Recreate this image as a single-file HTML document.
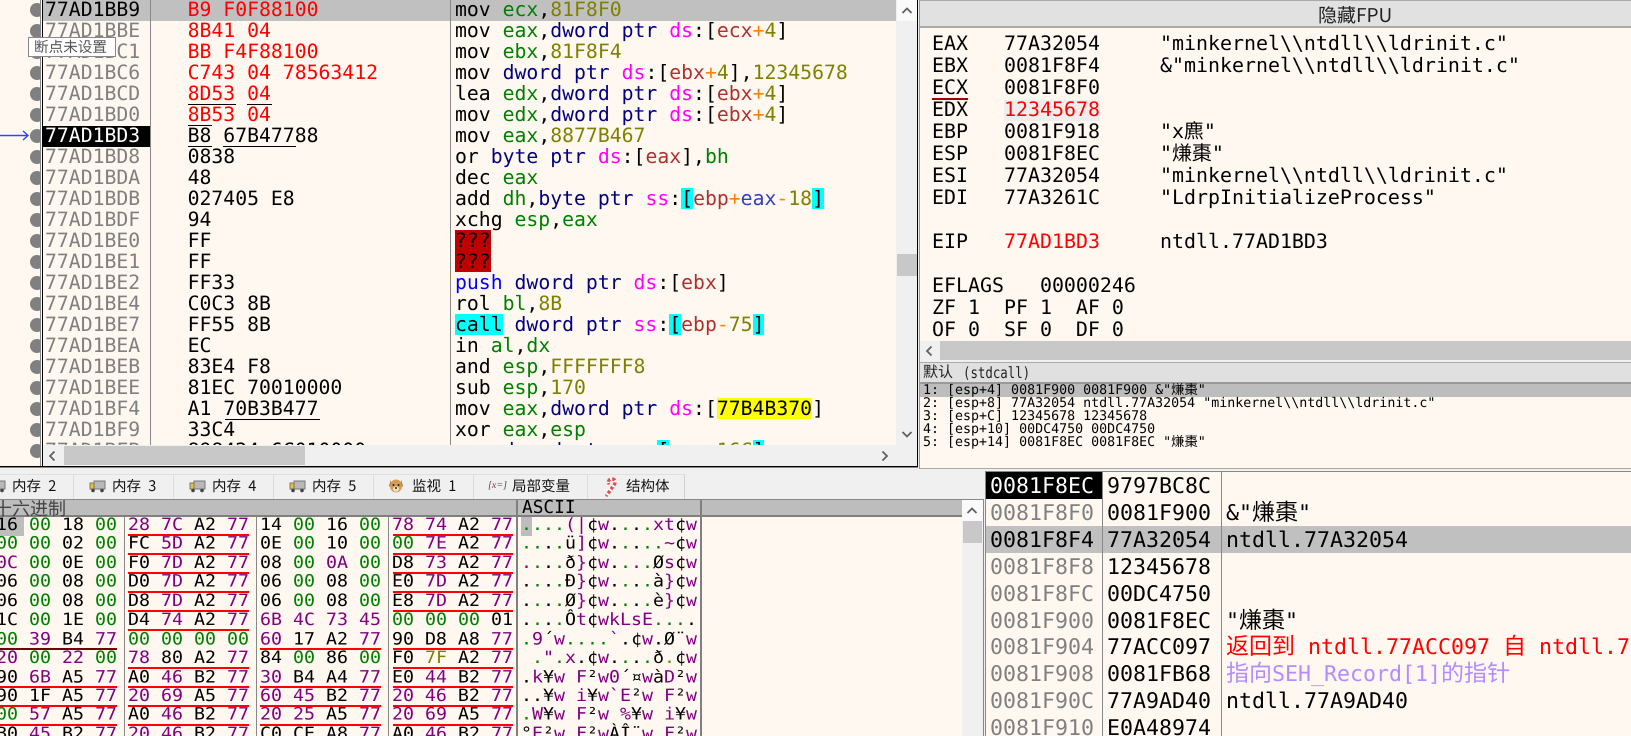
<!DOCTYPE html>
<html><head><meta charset="utf-8"><style>
html,body{margin:0;padding:0;width:1631px;height:736px;overflow:hidden;background:#f0f0f0}
body{position:relative;font-family:"DejaVu Sans Mono","WenQuanYi Zen Hei",monospace;text-rendering:geometricPrecision;color:#000}
div{position:absolute;box-sizing:border-box}
.col{white-space:pre;top:-1px;font-size:19.77px;line-height:21px}
.g{color:#008000}.o{color:#808000}.n{color:#000080}.m{color:#ff00ff}.k{color:#b03030}.a{color:#ff8000}.u{color:#3040c0}
.c{background:#00ffff;display:inline-block;height:21px;vertical-align:top}
.y{background:#ffff00;display:inline-block;height:21px;vertical-align:top}
.q{background:#c00000;display:inline-block;height:21px;vertical-align:top}
.dot{width:14px;height:14px;border-radius:50%;background:#808080;left:30px}
.hd{background:#c0c0c0}
.ln{background:#000;height:1px}
.reg{white-space:pre;font-size:19.93px;line-height:22px;top:33px}
.tab{font:14.5px/18px "WenQuanYi Zen Hei","Noto Sans CJK SC",sans-serif;top:477px;white-space:pre;color:#111;word-spacing:4px}
.sep{width:1px;top:474px;height:25px;background:#dcdcdc}
.dump{white-space:pre;font-size:18.27px;line-height:20.43px;transform:scaleY(.93);transform-origin:0 0}
.dump i{font-style:normal;color:#008000}.dump b{font-weight:normal;color:#800080}.dump em{font-style:normal;color:#808000}
.rl{height:2px;background:#f00}
.st{white-space:pre;font-size:21.6px;line-height:26.9px;top:474px}
.cj{font-size:23px;line-height:0;font-family:"WenQuanYi Zen Hei","Noto Sans CJK SC",sans-serif}
.args{white-space:pre;font-size:13.3px;line-height:12.9px;left:923px;top:385px}
</style></head><body>

<div style="left:0;top:0;width:917px;height:466px;background:#fff8f0"></div>

<div class="dot" style="top:3px"></div><div class="dot" style="top:24px"></div><div class="dot" style="top:45px"></div><div class="dot" style="top:66px"></div><div class="dot" style="top:87px"></div><div class="dot" style="top:108px"></div><div class="dot" style="top:129px"></div><div class="dot" style="top:150px"></div><div class="dot" style="top:171px"></div><div class="dot" style="top:192px"></div><div class="dot" style="top:213px"></div><div class="dot" style="top:234px"></div><div class="dot" style="top:255px"></div><div class="dot" style="top:276px"></div><div class="dot" style="top:297px"></div><div class="dot" style="top:318px"></div><div class="dot" style="top:339px"></div><div class="dot" style="top:360px"></div><div class="dot" style="top:381px"></div><div class="dot" style="top:402px"></div><div class="dot" style="top:423px"></div><div class="dot" style="top:444px"></div>
<div style="left:41px;top:0;width:1px;height:466px;background:#fff8f0"></div>
<div style="left:40px;top:0;width:1px;height:466px;background:#888"></div>
<div style="left:42px;top:0;width:1px;height:467px;background:#000"></div>
<div style="left:43px;top:0;width:800px;height:466px;background:#fff8f0"></div>
<div style="left:0;top:466px;width:918px;height:1px;background:#000"></div>
<div style="left:0;top:467px;width:918px;height:1px;background:#888"></div>
<div style="left:917px;top:0;width:1px;height:467px;background:#000"></div>

<div class="hd" style="left:43px;top:0;width:853px;height:21px"></div>
<div style="left:43px;top:126px;width:107px;height:21px;background:#000"></div>
<div style="left:150px;top:0;width:1px;height:445px;background:#888"></div>
<div style="left:450px;top:0;width:1px;height:445px;background:#888"></div>

<div style="left:0;top:0;width:896px;height:445px;overflow:hidden">
<div class="col" style="left:45px;color:#808080"><span style="color:#000">77AD1BB9</span>
77AD1BBE
77AD1BC1
77AD1BC6
77AD1BCD
77AD1BD0
<span style="color:#fff">77AD1BD3</span>
77AD1BD8
77AD1BDA
77AD1BDB
77AD1BDF
77AD1BE0
77AD1BE1
77AD1BE2
77AD1BE4
77AD1BE7
77AD1BEA
77AD1BEB
77AD1BEE
77AD1BF4
77AD1BF9
77AD1BFB</div>
<div class="col" style="left:187.6px"><span style="color:#f00">B9 F0F88100
8B41 04
BB F4F88100
C743 04 78563412
8D53 04
8B53 04</span>
B8 67B47788
0838
48
027405 E8
94
FF
FF
FF33
C0C3 8B
FF55 8B
EC
83E4 F8
81EC 70010000
A1 70B3B477
33C4
898424 6C010000</div>
<div class="col" style="left:455px">mov <span class="g">ecx</span>,<span class="o">81F8F0</span>
mov <span class="g">eax</span>,<span class="n">dword ptr</span> <span class="m">ds</span>:[<span class="k">ecx</span><span class="a">+</span><span class="o">4</span>]
mov <span class="g">ebx</span>,<span class="o">81F8F4</span>
mov <span class="n">dword ptr</span> <span class="m">ds</span>:[<span class="k">ebx</span><span class="a">+</span><span class="o">4</span>],<span class="o">12345678</span>
lea <span class="g">edx</span>,<span class="n">dword ptr</span> <span class="m">ds</span>:[<span class="k">ebx</span><span class="a">+</span><span class="o">4</span>]
mov <span class="g">edx</span>,<span class="n">dword ptr</span> <span class="m">ds</span>:[<span class="k">ebx</span><span class="a">+</span><span class="o">4</span>]
mov <span class="g">eax</span>,<span class="o">8877B467</span>
or <span class="n">byte ptr</span> <span class="m">ds</span>:[<span class="k">eax</span>],<span class="g">bh</span>
dec <span class="g">eax</span>
add <span class="g">dh</span>,<span class="n">byte ptr</span> <span class="m">ss</span>:<span class="c">[</span><span class="k">ebp</span><span class="a">+</span><span class="u">eax</span><span class="a">-</span><span class="o">18</span><span class="c">]</span>
xchg <span class="g">esp</span>,<span class="g">eax</span>
<span class="q">???</span>
<span class="q">???</span>
<span style="color:#0000ff">push</span> <span class="n">dword ptr</span> <span class="m">ds</span>:[<span class="k">ebx</span>]
rol <span class="g">bl</span>,<span class="o">8B</span>
<span class="c">call</span> <span class="n">dword ptr</span> <span class="m">ss</span>:<span class="c">[</span><span class="k">ebp</span><span class="a">-</span><span class="o">75</span><span class="c">]</span>
in <span class="g">al</span>,<span class="g">dx</span>
and <span class="g">esp</span>,<span class="o">FFFFFFF8</span>
sub <span class="g">esp</span>,<span class="o">170</span>
mov <span class="g">eax</span>,<span class="n">dword ptr</span> <span class="m">ds</span>:[<span class="y">77B4B370</span>]
xor <span class="g">eax</span>,<span class="g">esp</span>
mov <span class="n">dword ptr</span> <span class="m">ss</span>:<span class="c">[</span><span class="k">esp</span><span class="a">+</span><span class="o">16C</span><span class="c">]</span>,<span class="g">eax</span></div>
</div>

<div class="ln" style="left:188px;top:104px;width:48px"></div>
<div class="ln" style="left:247px;top:104px;width:25px"></div>
<div class="ln" style="left:188px;top:125px;width:24px"></div>
<div class="ln" style="left:188px;top:146px;width:24px"></div>
<div class="ln" style="left:223px;top:146px;width:73px"></div>
<div class="ln" style="left:225px;top:419px;width:95px"></div>

<svg style="position:absolute;left:0;top:128px" width="30" height="15"><path d="M0 7.5H28M23 3l5 4.5-5 4.5" fill="none" stroke="#3344ff" stroke-width="1.4"/></svg>

<div style="left:28px;top:37px;width:88px;height:20px;background:#fff;border:1px solid #888;font:14.6px/18px 'WenQuanYi Zen Hei','Noto Sans CJK SC',sans-serif;color:#555;padding-left:5px;white-space:pre">断点未设置</div>

<div style="left:896px;top:0;width:21px;height:445px;background:#f0f0f0"></div>
<div style="left:897px;top:0;width:20px;height:21px;background:#fafafa"></div>
<div style="left:897px;top:254px;width:20px;height:22px;background:#c8c8c8"></div>
<svg style="position:absolute;left:901px;top:6px" width="12" height="9"><path d="M1.5 7L6 2.5 10.500 7" fill="none" stroke="#606060" stroke-width="1.800"/></svg>
<svg style="position:absolute;left:901px;top:430px" width="12" height="9"><path d="M1.5 2L6 6.500 10.500 2" fill="none" stroke="#606060" stroke-width="1.800"/></svg>

<div style="left:43px;top:445px;width:874px;height:21px;background:#f0f0f0"></div>
<div style="left:64px;top:446px;width:241px;height:19px;background:#c8c8c8"></div>
<svg style="position:absolute;left:47px;top:450px" width="10" height="12"><path d="M7.500 1.500L3 6l4.500 4.500" fill="none" stroke="#606060" stroke-width="1.800"/></svg>
<svg style="position:absolute;left:880px;top:450px" width="10" height="12"><path d="M2.500 1.500L7 6l-4.500 4.500" fill="none" stroke="#606060" stroke-width="1.800"/></svg>

<!-- right pane -->
<div style="left:919px;top:0;width:1px;height:469px;background:#999"></div>
<div style="left:920px;top:0;width:711px;height:28px;background:#e1e1e1;border-bottom:2px solid #aaa;border-top:1px solid #aaa"></div>
<div style="left:1318px;top:4px;font:19px/22px 'WenQuanYi Zen Hei','Noto Sans CJK SC',sans-serif;color:#222;white-space:pre">隐藏FPU</div>
<div style="left:920px;top:28px;width:711px;height:313px;background:#fff8f0;overflow:hidden"></div>
<div style="left:920px;top:30px;width:711px;height:311px;overflow:hidden">
<div class="reg" style="left:12px;top:3px">EAX
EBX
ECX
EDX
EBP
ESP
ESI
EDI

EIP

</div>
<div style="left:84px;top:70px;width:96px;height:21px;background:#eeeeee"></div>
<div class="reg" style="left:84px;top:3px">77A32054
0081F8F4
0081F8F0
<span style="color:#f00">12345678</span>
0081F918
0081F8EC
77A32054
77A3261C

<span style="color:#f00">77AD1BD3</span></div>
<div class="reg" style="left:240px;top:3px">"minkernel\\ntdll\\ldrinit.c"
&amp;"minkernel\\ntdll\\ldrinit.c"

 
"x麃"
"熑棗"
"minkernel\\ntdll\\ldrinit.c"
"LdrpInitializeProcess"

ntdll.77AD1BD3</div>
<div class="reg" style="left:12px;top:245px">EFLAGS   00000246
ZF 1  PF 1  AF 0
OF 0  SF 0  DF 0</div>
</div>
<div style="left:932px;top:98px;width:36px;height:2px;background:#a00000"></div>

<div style="left:920px;top:341px;width:711px;height:19px;background:#f0f0f0"></div>
<div style="left:940px;top:341px;width:691px;height:19px;background:#c8c8c8"></div>
<svg style="position:absolute;left:924px;top:345px" width="10" height="12"><path d="M7.500 1.500L3 6l4.500 4.500" fill="none" stroke="#606060" stroke-width="1.800"/></svg>

<div style="left:920px;top:362px;width:711px;height:22px;background:#e0e0e0;border-top:1px solid #aaa;border-bottom:2px solid #999"></div>
<div style="left:923px;top:363px;white-space:pre;font:15px/20px 'WenQuanYi Zen Hei',sans-serif;color:#222">默认</div>
<div style="left:963px;top:363px;white-space:pre;font-size:12.4px;line-height:20px;color:#222;transform:scaleY(1.25)">(stdcall)</div>
<div style="left:920px;top:384px;width:711px;height:85px;background:#fff8f0;border-bottom:1px solid #aaa"></div>
<div style="left:920px;top:384px;width:711px;height:13px;background:#bdbdbd"></div>
<div class="args">1: [esp+4] 0081F900 0081F900 &amp;"熑棗"
2: [esp+8] 77A32054 ntdll.77A32054 "minkernel\\ntdll\\ldrinit.c"
3: [esp+C] 12345678 12345678
4: [esp+10] 00DC4750 00DC4750
5: [esp+14] 0081F8EC 0081F8EC "熑棗"</div>

<!-- tabs -->
<div class="sep" style="left:73px"></div><div class="sep" style="left:173px"></div><div class="sep" style="left:273px"></div><div class="sep" style="left:373px"></div><div class="sep" style="left:473px"></div><div class="sep" style="left:587px"></div><div class="sep" style="left:684px;background:#d0d0d0"></div>
<div style="left:0;top:474px;width:684px;height:1px;background:#e0e0e0"></div>
<div class="tab" style="left:12px">内存 2</div>
<div class="tab" style="left:112px">内存 3</div>
<div class="tab" style="left:212px">内存 4</div>
<div class="tab" style="left:312px">内存 5</div>
<div class="tab" style="left:412px">监视 1</div>
<div class="tab" style="left:512px">局部变量</div>
<div class="tab" style="left:626px">结构体</div>
<svg style="position:absolute;left:-11px;top:480px" width="17" height="13"><rect x="5" y="1" width="11" height="8" fill="#b8b8b8" stroke="#777"/><rect x="1" y="3" width="4" height="6" fill="#f0c020" stroke="#777"/><circle cx="4" cy="10.500" r="1.800" fill="#444"/><circle cx="13" cy="10.500" r="1.800" fill="#444"/></svg>
<svg style="position:absolute;left:89px;top:480px" width="17" height="13"><rect x="5" y="1" width="11" height="8" fill="#b8b8b8" stroke="#777"/><rect x="1" y="3" width="4" height="6" fill="#f0c020" stroke="#777"/><circle cx="4" cy="10.500" r="1.800" fill="#444"/><circle cx="13" cy="10.500" r="1.800" fill="#444"/></svg>
<svg style="position:absolute;left:189px;top:480px" width="17" height="13"><rect x="5" y="1" width="11" height="8" fill="#b8b8b8" stroke="#777"/><rect x="1" y="3" width="4" height="6" fill="#f0c020" stroke="#777"/><circle cx="4" cy="10.500" r="1.800" fill="#444"/><circle cx="13" cy="10.500" r="1.800" fill="#444"/></svg>
<svg style="position:absolute;left:289px;top:480px" width="17" height="13"><rect x="5" y="1" width="11" height="8" fill="#b8b8b8" stroke="#777"/><rect x="1" y="3" width="4" height="6" fill="#f0c020" stroke="#777"/><circle cx="4" cy="10.500" r="1.800" fill="#444"/><circle cx="13" cy="10.500" r="1.800" fill="#444"/></svg>
<svg style="position:absolute;left:388px;top:477px" width="16" height="17"><path d="M3 3L1 9l2 1zM13 3l2 6-2 1z" fill="#8a5a20"/><ellipse cx="8" cy="9" rx="6" ry="6.500" fill="#d89a50"/><ellipse cx="8" cy="12" rx="3" ry="2.800" fill="#f6e2c0"/><circle cx="5.500" cy="8" r="1" fill="#222"/><circle cx="10.500" cy="8" r="1" fill="#222"/><circle cx="8" cy="11" r="1" fill="#222"/></svg>
<div style="left:488px;top:480px;font:italic 10px/12px 'Liberation Serif',serif;color:#444;white-space:pre">[<span style="color:#a03030">x</span>=]</div>
<svg style="position:absolute;left:604px;top:477px" width="15" height="20"><path d="M3 18L10 8C12 5 11 2 8 2 5.500 2 4 4 4.500 6" fill="none" stroke="#e05050" stroke-width="3.400" stroke-linecap="round"/><path d="M3 18L10 8C12 5 11 2 8 2 5.500 2 4 4 4.500 6" fill="none" stroke="#fff" stroke-width="3.400" stroke-dasharray="2 3"/></svg>

<!-- dump -->
<div style="left:0;top:499px;width:984px;height:237px;background:#fff8f0;border-top:1px solid #888;border-right:1px solid #888"></div>
<div style="left:0;top:500px;width:962px;height:15px;background:#bdbdbd"></div>
<div style="left:0;top:515px;width:962px;height:2px;background:#808080"></div>
<div style="left:-6px;top:498px;font:18px/20px 'WenQuanYi Zen Hei','Noto Sans CJK SC',sans-serif;color:#444;white-space:pre">十六进制</div>
<div style="left:522px;top:498px;font-size:17.800px;line-height:20px;white-space:pre;color:#000">ASCII</div>
<div style="left:516px;top:500px;width:2px;height:236px;background:#808080"></div>
<div style="left:700px;top:500px;width:2px;height:236px;background:#808080"></div>
<div style="left:124px;top:517px;width:1px;height:219px;background:#888"></div>
<div style="left:256px;top:517px;width:1px;height:219px;background:#888"></div>
<div style="left:388px;top:517px;width:1px;height:219px;background:#888"></div>
<div style="left:0;top:517px;width:24px;height:19px;background:#bdbdbd"></div>
<div style="left:521px;top:517px;width:11px;height:19px;background:#bdbdbd"></div>

<div style="left:0;top:500px;width:516px;height:236px;overflow:hidden">
<div class="dump" style="left:-4px;top:16.100px">16 <i>00</i> 18 <i>00</i> <b>28 7C</b> A2 <b>77</b> 14 <i>00</i> 16 <i>00</i> <b>78 74</b> A2 <b>77</b>
<i>00 00</i> 02 <i>00</i> FC <b>5D</b> A2 <b>77</b> 0E <i>00</i> 10 <i>00 00</i> <b>7E</b> A2 <b>77</b>
<b>0C</b> <i>00</i> 0E <i>00</i> F0 <b>7D</b> A2 <b>77</b> 08 <i>00</i> <b>0A</b> <i>00</i> D8 <b>73</b> A2 <b>77</b>
06 <i>00</i> 08 <i>00</i> D0 <b>7D</b> A2 <b>77</b> 06 <i>00</i> 08 <i>00</i> E0 <b>7D</b> A2 <b>77</b>
06 <i>00</i> 08 <i>00</i> D8 <b>7D</b> A2 <b>77</b> 06 <i>00</i> 08 <i>00</i> E8 <b>7D</b> A2 <b>77</b>
1C <i>00</i> 1E <i>00</i> D4 <b>74</b> A2 <b>77 6B 4C 73 45</b> <i>00 00 00</i> 01
<i>00</i> <b>39</b> B4 <b>77</b> <i>00 00 00 00</i> <b>60</b> 17 A2 <b>77</b> 90 D8 A8 <b>77</b>
<b>20</b> <i>00</i> <b>22</b> <i>00</i> <b>78</b> 80 A2 <b>77</b> 84 <i>00</i> 86 <i>00</i> F0 <em>7F</em> A2 <b>77</b>
90 <b>6B</b> A5 <b>77</b> A0 <b>46</b> B2 <b>77 30</b> B4 A4 <b>77</b> E0 <b>44</b> B2 <b>77</b>
90 1F A5 <b>77 20 69</b> A5 <b>77 60 45</b> B2 <b>77 20 46</b> B2 <b>77</b>
<i>00</i> <b>57</b> A5 <b>77</b> A0 <b>46</b> B2 <b>77 20 25</b> A5 <b>77 20 69</b> A5 <b>77</b>
B0 <b>45</b> B2 <b>77 20 46</b> B2 <b>77</b> C0 CE A8 <b>77</b> A0 <b>46</b> B2 <b>77</b></div>
</div>
<div style="left:518px;top:500px;width:182px;height:236px;overflow:hidden">
<div class="dump" style="left:3px;top:16.100px"><i>.</i><i>.</i><i>.</i><i>.</i><b>(|</b>¢<b>w</b>.<i>.</i>.<i>.</i><b>xt</b>¢<b>w</b>
<i>..</i>.<i>.</i>ü<b>]</b>¢<b>w</b>.<i>.</i>.<i>..</i><b>~</b>¢<b>w</b>
<b>.</b><i>.</i>.<i>.</i>ð<b>}</b>¢<b>w</b>.<i>.</i><b>.</b><i>.</i>Ø<b>s</b>¢<b>w</b>
.<i>.</i>.<i>.</i>Ð<b>}</b>¢<b>w</b>.<i>.</i>.<i>.</i>à<b>}</b>¢<b>w</b>
.<i>.</i>.<i>.</i>Ø<b>}</b>¢<b>w</b>.<i>.</i>.<i>.</i>è<b>}</b>¢<b>w</b>
.<i>.</i>.<i>.</i>Ô<b>t</b>¢<b>wkLsE</b><i>...</i>.
<i>.</i><b>9</b>´<b>w</b><i>....</i><b>`</b>.¢<b>w</b>.Ø¨<b>w</b>
 <i>.</i><b>"</b><i>.</i><b>x</b>.¢<b>w</b>.<i>.</i>.<i>.</i>ð<em>.</em>¢<b>w</b>
.<b>k</b>¥<b>w</b> <b>F</b>²<b>w0</b>´¤<b>w</b>à<b>D</b>²<b>w</b>
..¥<b>w i</b>¥<b>w`E</b>²<b>w F</b>²<b>w</b>
<i>.</i><b>W</b>¥<b>w</b> <b>F</b>²<b>w %</b>¥<b>w i</b>¥<b>w</b>
°<b>E</b>²<b>w F</b>²<b>w</b>ÀÎ¨<b>w</b> <b>F</b>²<b>w</b></div>
</div>

<!-- dump red lines -->
<div class="rl" style="left:128px;top:534px;width:121px"></div><div class="rl" style="left:393px;top:534px;width:120px"></div>
<div class="rl" style="left:128px;top:553px;width:121px"></div><div class="rl" style="left:393px;top:553px;width:120px"></div>
<div class="rl" style="left:128px;top:572px;width:121px"></div><div class="rl" style="left:393px;top:572px;width:120px"></div>
<div class="rl" style="left:128px;top:591px;width:121px"></div><div class="rl" style="left:393px;top:591px;width:120px"></div>
<div class="rl" style="left:128px;top:610px;width:121px"></div><div class="rl" style="left:393px;top:610px;width:120px"></div>
<div class="rl" style="left:128px;top:629px;width:121px"></div>
<div class="rl" style="left:0;top:648px;width:117px;background:#700000"></div><div class="rl" style="left:260px;top:648px;width:121px"></div><div class="rl" style="left:393px;top:648px;width:120px"></div>
<div class="rl" style="left:128px;top:667px;width:121px"></div><div class="rl" style="left:393px;top:667px;width:120px"></div>
<div class="rl" style="left:0;top:686px;width:117px"></div><div class="rl" style="left:128px;top:686px;width:121px"></div><div class="rl" style="left:260px;top:686px;width:121px"></div><div class="rl" style="left:393px;top:686px;width:120px"></div>
<div class="rl" style="left:0;top:705px;width:117px"></div><div class="rl" style="left:128px;top:705px;width:121px"></div><div class="rl" style="left:260px;top:705px;width:121px"></div><div class="rl" style="left:393px;top:705px;width:120px"></div>
<div class="rl" style="left:0;top:724px;width:117px"></div><div class="rl" style="left:128px;top:724px;width:121px"></div><div class="rl" style="left:260px;top:724px;width:121px"></div><div class="rl" style="left:393px;top:724px;width:120px"></div>

<!-- dump scrollbar -->
<div style="left:962px;top:500px;width:21px;height:236px;background:#f0f0f0"></div>
<div style="left:962px;top:500px;width:21px;height:21px;background:#fafafa"></div>
<div style="left:963px;top:521px;width:19px;height:22px;background:#c8c8c8"></div>
<svg style="position:absolute;left:966px;top:506px" width="12" height="9"><path d="M1.500 7L6 2.500 10.500 7" fill="none" stroke="#606060" stroke-width="1.800"/></svg>

<!-- stack -->
<div style="left:985px;top:471px;width:646px;height:265px;background:#fff8f0;border-left:1px solid #888;border-top:1px solid #888"></div>
<div style="left:986px;top:472px;width:116px;height:27px;background:#000"></div>
<div class="hd" style="left:986px;top:526px;width:645px;height:27px"></div>
<div style="left:1102px;top:472px;width:1px;height:264px;background:#888"></div>
<div style="left:1221px;top:472px;width:1px;height:264px;background:#888"></div>
<div class="st" style="left:990px;color:#808080;height:262px;overflow:hidden"><span style="color:#fff">0081F8EC</span>
0081F8F0
<span style="color:#000">0081F8F4</span>
0081F8F8
0081F8FC
0081F900
0081F904
0081F908
0081F90C
0081F910</div>
<div class="st" style="left:1107px;height:262px;overflow:hidden">9797BC8C
0081F900
77A32054
12345678
00DC4750
0081F8EC
77ACC097
0081FB68
77A9AD40
E0A48974</div>
<div class="st" style="left:1226px;width:405px;height:262px;overflow:hidden">&nbsp;
&amp;"<span class="cj">熑棗</span>"
ntdll.77A32054


"<span class="cj">熑棗</span>"
<span style="color:#f00"><span class="cj">返回到</span> ntdll.77ACC097 <span class="cj">自</span> ntdll.77ACC091</span>
<span style="color:#b48cff"><span class="cj">指向</span>SEH_Record[1]<span class="cj">的指针</span></span>
ntdll.77A9AD40</div>

</body></html>
